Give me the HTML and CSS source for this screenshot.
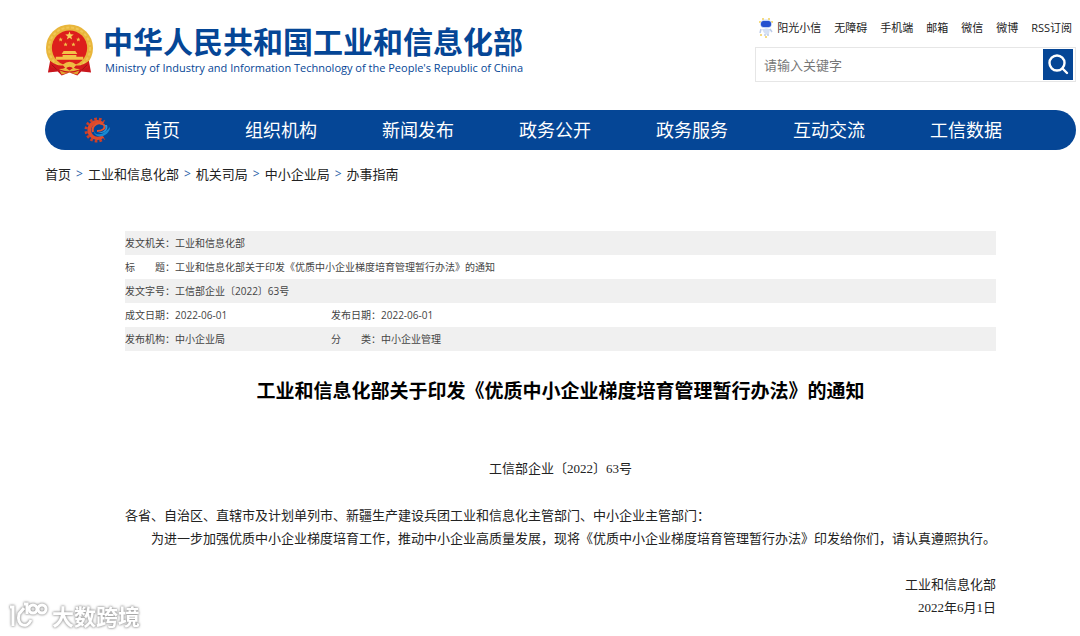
FILE: index.html
```html
<!DOCTYPE html>
<html lang="zh-CN">
<head>
    <meta charset="UTF-8">
    <meta name="viewport" content="width=device-width, initial-scale=1.0">
    <title>工业和信息化部关于印发《优质中小企业梯度培育管理暂行办法》的通知</title>
    <link rel="stylesheet" href="styles.css">
</head>
<body>
    <div class="page">
        <header class="header">
            <a class="brand" href="#">
                <svg class="emblem" viewBox="0 0 50 54" aria-hidden="true">
                    <path d="M6 34 L3 50 L13 49 L17 53 L25 50 L33 53 L37 49 L47 50 L44 34 Z" fill="#c9161d"/>
                    <circle cx="25" cy="25" r="24" fill="#e9b63b"/>
                    <circle cx="25" cy="25" r="21" fill="none" stroke="#f0c654" stroke-width="2" stroke-dasharray="3 2"/>
                    <circle cx="25" cy="25" r="18" fill="#dd1f1c"/>
                    <path d="M25 8 l1.1 3 3.2 .1 -2.5 2 .9 3.1 -2.7 -1.8 -2.7 1.8 .9 -3.1 -2.5 -2 3.2 -.1 Z" fill="#f7d35a"/>
                    <g fill="#f3c248">
                        <path id="star" d="M16 14 l.6 1.5 1.6 .1 -1.2 1 .4 1.6 -1.4 -.9 -1.4 .9 .4 -1.6 -1.2 -1 1.6 -.1 Z"/>
                        <use href="#star" x="18"/>
                        <use href="#star" x="5" y="5"/>
                        <use href="#star" x="13" y="5"/>
                        <path d="M19 28 H31 L33 31 H17 Z"/>
                        <path d="M18 32 H32 V34 H39 V37 H11 V34 H18 Z"/>
                    </g>
                    <path d="M5 38 Q14 45 20 42 Q25 37 30 42 Q36 45 45 38 L44 45 Q34 48 29 45 L25 48 L21 45 Q15 48 6 45 Z" fill="#d31a1c"/>
                    <path d="M18 42 Q25 36 32 42 L29 46 Q25 42 21 46 Z" fill="#efbd43"/>
                    <path d="M15 48 Q25 53 35 48 L33 52 L25 50 L17 52 Z" fill="#e0a62f"/>
                    <path d="M7 42 L12 47 M43 42 L38 47" stroke="#9f0f15" stroke-width="1"/>
                </svg>
                <span class="brand-text">
                    <span class="brand-cn">中华人民共和国工业和信息化部</span>
                    <span class="brand-en">Ministry of Industry and Information Technology of the People's Republic of China</span>
                </span>
            </a>
            <div class="tools">
                <div class="tool-links">
                    <a href="#" class="robot-link">
                        <svg class="robot" viewBox="0 0 16 22" aria-hidden="true">
                            <g fill="#f2cf58">
                                <circle cx="2" cy="5" r="1"/><circle cx="5" cy="2" r="1"/><circle cx="11" cy="2" r="1"/>
                                <circle cx="14" cy="5" r="1"/><circle cx="3" cy="18" r="1"/><circle cx="8" cy="20" r="1"/>
                            </g>
                            <ellipse cx="8" cy="7" rx="6" ry="4.5" fill="#c4d4f4"/>
                            <rect x="3" y="4" width="10" height="6" rx="2.5" fill="#2450cf"/>
                            <path d="M4 12 L12 12 L11 17 L9 18 L6 16 Z" fill="#d5e0f4"/>
                            <path d="M3 12 L2 16 M12 12 L14 15 M7 17 L7 19 M10 17 L10 19" stroke="#bccbe8" stroke-width="1.5"/>
                        </svg>
                        阳光小信
                    </a>
                    <a href="#">无障碍</a>
                    <a href="#">手机端</a>
                    <a href="#">邮箱</a>
                    <a href="#">微信</a>
                    <a href="#">微博</a>
                    <a href="#">RSS订阅</a>
                </div>
                <form class="search">
                    <input type="text" class="search-input" placeholder="请输入关键字" aria-label="请输入关键字">
                    <button type="button" class="search-btn" aria-label="搜索">
                        <svg viewBox="0 0 30 30" width="30" height="30" fill="none" stroke="#fff" stroke-width="2.4" stroke-linecap="round">
                            <circle cx="14" cy="14" r="7.5"/>
                            <path d="M19.5 19.5 L24 24"/>
                        </svg>
                    </button>
                </form>
            </div>
        </header>

        <nav class="nav">
            <svg class="nav-logo" viewBox="0 0 28 28" aria-hidden="true">
                <circle cx="13" cy="14" r="11" fill="none" stroke="#cf3f27" stroke-width="3" stroke-dasharray="2.6 2" pathLength="69"
                    transform="rotate(40 13 14)"/>
                <path d="M20 6.5 A10 10 0 1 0 20 21.5 L18 19 A6.5 6.5 0 1 1 17.5 9 Z" fill="#e0492a"/>
                <path d="M21 4 L27 8 V20 L21 24 L17 14 Z" fill="#054696"/>
                <path d="M9 16 C7 9 15 5 20 9 C22 12 19 15 13 15" fill="none" stroke="#e5522f" stroke-width="2"/>
                <path d="M10 15 C11 20 19 20 26 11 C26 18 17 23 12 19 C10 18 10 16 10 15 Z" fill="#1689d1"/>
                <path d="M20 9 C24 12 20 17 14 16 C19 19 25 14 23 9 Z" fill="#2b97d8"/>
            </svg>
            <a href="#">首页</a>
            <a href="#">组织机构</a>
            <a href="#">新闻发布</a>
            <a href="#">政务公开</a>
            <a href="#">政务服务</a>
            <a href="#">互动交流</a>
            <a href="#">工信数据</a>
        </nav>

        <div class="crumbs">
            <a href="#">首页</a>
            <span>&gt;</span>
            <a href="#">工业和信息化部</a>
            <span>&gt;</span>
            <a href="#">机关司局</a>
            <span>&gt;</span>
            <a href="#">中小企业局</a>
            <span>&gt;</span>
            <a href="#">办事指南</a>
        </div>

        <main class="article">
            <table class="info">
                <tr>
                    <th>发文机关：</th>
                    <td colspan="3">工业和信息化部</td>
                </tr>
                <tr>
                    <th>标　　题：</th>
                    <td colspan="3">工业和信息化部关于印发《优质中小企业梯度培育管理暂行办法》的通知</td>
                </tr>
                <tr>
                    <th>发文字号：</th>
                    <td colspan="3">工信部企业〔2022〕63号</td>
                </tr>
                <tr>
                    <th>成文日期：</th>
                    <td class="short">2022-06-01</td>
                    <th>发布日期：</th>
                    <td>2022-06-01</td>
                </tr>
                <tr>
                    <th>发布机构：</th>
                    <td class="short">中小企业局</td>
                    <th>分　　类：</th>
                    <td>中小企业管理</td>
                </tr>
            </table>

            <h1>工业和信息化部关于印发《优质中小企业梯度培育管理暂行办法》的通知</h1>

            <div class="content">
                <p class="doc-no">工信部企业〔2022〕63号</p>
                <p>各省、自治区、直辖市及计划单列市、新疆生产建设兵团工业和信息化主管部门、中小企业主管部门：</p>
                <p class="indent">为进一步加强优质中小企业梯度培育工作，推动中小企业高质量发展，现将《优质中小企业梯度培育管理暂行办法》印发给你们，请认真遵照执行。</p>
                <div class="sign">
                    <p>工业和信息化部</p>
                    <p>2022年6月1日</p>
                </div>
            </div>
        </main>
    </div>

    <div class="watermark">
        <svg viewBox="0 0 40 30" width="40" height="30" fill="none" stroke="#fff" stroke-width="3" aria-hidden="true">
            <path d="M1 6 H4 V25"/>
            <path d="M15 7 L10 13 C7 25 18 28 22 19"/>
            <path d="M15 3 H18 V13"/>
            <circle cx="24" cy="8" r="4"/>
            <circle cx="33" cy="8" r="4"/>
        </svg>
        <span>大数跨境</span>
    </div>
</body>
</html>
```

FILE: styles.css
```css
* {
    box-sizing: border-box;
}
body {
    margin: 0;
    background-color: #fff;
    color: #222;
    font-family: "Open Sans", "Noto Sans CJK SC", sans-serif;
    font-size: 13px;
}
a {
    color: inherit;
    text-decoration: none;
}
p {
    margin: 0;
}
.page {
    padding: 16px 4px 0 45px;
}

/* header */
.header {
    display: flex;
    justify-content: space-between;
    height: 94px;
}
.brand {
    display: flex;
    align-items: flex-start;
    gap: 9px;
    padding-top: 7px;
    color: #054696;
}
.emblem {
    width: 49px;
    height: 54px;
}
.brand-text {
    display: flex;
    flex-direction: column;
}
.brand-cn {
    font-size: 30px;
    font-weight: bold;
    line-height: 38px;
}
.brand-en {
    padding-left: 2px;
    font-size: 11px;
    line-height: 14px;
}
.tools {
    width: 321px;
}
.tool-links {
    display: flex;
    justify-content: flex-end;
    gap: 13px;
    padding-right: 4px;
    font-size: 11px;
    line-height: 24px;
    white-space: nowrap;
}
.robot-link {
    display: flex;
    align-items: center;
    gap: 3px;
}
.robot {
    width: 16px;
    height: 22px;
}
.search {
    display: flex;
    align-items: center;
    height: 35px;
    margin-top: 7px;
    padding-right: 2px;
    border: 1px solid #e6e6e6;
}
.search-input {
    flex: 1;
    min-width: 0;
    padding: 0 8px;
    border: 0;
    outline: none;
    font-family: inherit;
    font-size: 13px;
}
.search-input::placeholder {
    color: #777;
}
.search-btn {
    width: 30px;
    height: 31px;
    padding: 0;
    border: 0;
    background-color: #054696;
    cursor: pointer;
}

/* navigation */
.nav {
    display: flex;
    align-items: center;
    gap: 65px;
    height: 40px;
    padding-left: 39px;
    border-radius: 20px;
    background-color: #054696;
    color: #fff;
    font-size: 18px;
    line-height: 24px;
    white-space: nowrap;
}
.nav-logo {
    width: 28px;
    height: 28px;
    margin-right: -33px;
}
.crumbs {
    display: flex;
    gap: 5px;
    padding-top: 14px;
    line-height: 20px;
}
.crumbs span {
    color: #2a62a8;
    font-size: 12px;
}

/* article */
.article {
    padding: 47px 80px 0;
}
.info {
    width: 100%;
    border-collapse: collapse;
    color: #444;
    font-size: 10px;
    line-height: 24px;
}
.info tr:nth-child(odd) {
    background-color: #f0f0f0;
}
.info th,
.info td {
    padding: 0;
    font-weight: normal;
    text-align: left;
}
.info th {
    width: 50px;
    white-space: nowrap;
}
.info .short {
    width: 156px;
}
h1 {
    margin: 26px 0 0;
    color: #000;
    font-size: 19px;
    line-height: 28px;
    text-align: center;
}
.content {
    margin-top: 52px;
    font-family: "Liberation Serif", "Noto Sans CJK SC", serif;
    line-height: 23px;
}
.doc-no {
    margin-bottom: 24px;
    text-align: center;
}
.indent {
    text-indent: 2em;
}
.sign {
    margin-top: 23px;
    text-align: right;
}

/* watermark */
.watermark {
    position: absolute;
    left: 9px;
    bottom: 5px;
    display: flex;
    align-items: center;
    gap: 3px;
    color: #fff;
    font-size: 22px;
    font-weight: bold;
    line-height: 30px;
    filter: drop-shadow(0 0 1px #999) drop-shadow(0 0 1px #bbb);
}
```
